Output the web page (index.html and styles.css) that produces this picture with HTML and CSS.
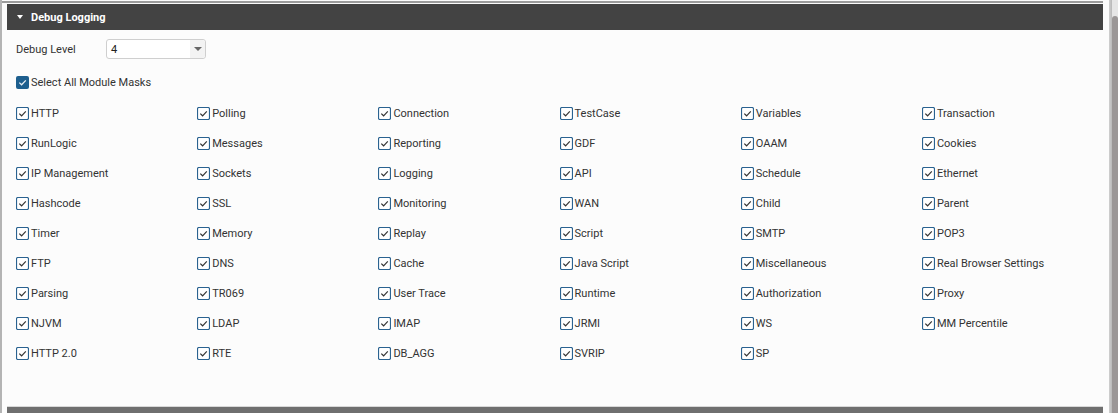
FILE: index.html
```html
<!DOCTYPE html>
<html>
<head>
<meta charset="utf-8">
<link rel="stylesheet" href="styles.css">
</head>
<body>
<svg width="0" height="0" class="defs">
  <defs>
    <symbol id="cbx" viewBox="0 0 13 13">
      <rect x="0.5" y="0.5" width="12" height="12" rx="1.5" fill="#fff" stroke="#2a6290" stroke-width="1.2"/>
      <path d="M3.3 6.6 L5.6 8.8 L9.8 4.4" fill="none" stroke="#333" stroke-width="1.2"/>
    </symbol>
  </defs>
</svg>
<div class="page">
  <div class="main">
    <div class="topline"></div>
    <div class="header">
      <span class="caret"></span>
      <span class="title">Debug Logging</span>
    </div>
    <div class="content">
      <div class="level-row">
        <span class="level-label">Debug Level</span>
        <div class="select">
          <span class="select-value">4</span>
          <span class="select-arrow"><span class="arrow-tri"></span></span>
        </div>
      </div>
      <div class="all-row">
        <svg class="cb" width="13" height="13" viewBox="0 0 13 13"><rect x="0" y="0" width="13" height="13" rx="2" fill="#1e5f8e"/><path d="M3.3 6.6 L5.6 8.8 L9.8 4.4" fill="none" stroke="#e8eef3" stroke-width="1.3"/></svg>
        <span class="lbl">Select All Module Masks</span>
      </div>
      <div class="grid">
        <div class="item"><svg class="cb" width="13" height="13"><use href="#cbx"/></svg><span class="lbl">HTTP</span></div>
        <div class="item"><svg class="cb" width="13" height="13"><use href="#cbx"/></svg><span class="lbl">Polling</span></div>
        <div class="item"><svg class="cb" width="13" height="13"><use href="#cbx"/></svg><span class="lbl">Connection</span></div>
        <div class="item"><svg class="cb" width="13" height="13"><use href="#cbx"/></svg><span class="lbl">TestCase</span></div>
        <div class="item"><svg class="cb" width="13" height="13"><use href="#cbx"/></svg><span class="lbl">Variables</span></div>
        <div class="item"><svg class="cb" width="13" height="13"><use href="#cbx"/></svg><span class="lbl">Transaction</span></div>

        <div class="item"><svg class="cb" width="13" height="13"><use href="#cbx"/></svg><span class="lbl">RunLogic</span></div>
        <div class="item"><svg class="cb" width="13" height="13"><use href="#cbx"/></svg><span class="lbl">Messages</span></div>
        <div class="item"><svg class="cb" width="13" height="13"><use href="#cbx"/></svg><span class="lbl">Reporting</span></div>
        <div class="item"><svg class="cb" width="13" height="13"><use href="#cbx"/></svg><span class="lbl">GDF</span></div>
        <div class="item"><svg class="cb" width="13" height="13"><use href="#cbx"/></svg><span class="lbl">OAAM</span></div>
        <div class="item"><svg class="cb" width="13" height="13"><use href="#cbx"/></svg><span class="lbl">Cookies</span></div>

        <div class="item"><svg class="cb" width="13" height="13"><use href="#cbx"/></svg><span class="lbl">IP Management</span></div>
        <div class="item"><svg class="cb" width="13" height="13"><use href="#cbx"/></svg><span class="lbl">Sockets</span></div>
        <div class="item"><svg class="cb" width="13" height="13"><use href="#cbx"/></svg><span class="lbl">Logging</span></div>
        <div class="item"><svg class="cb" width="13" height="13"><use href="#cbx"/></svg><span class="lbl">API</span></div>
        <div class="item"><svg class="cb" width="13" height="13"><use href="#cbx"/></svg><span class="lbl">Schedule</span></div>
        <div class="item"><svg class="cb" width="13" height="13"><use href="#cbx"/></svg><span class="lbl">Ethernet</span></div>

        <div class="item"><svg class="cb" width="13" height="13"><use href="#cbx"/></svg><span class="lbl">Hashcode</span></div>
        <div class="item"><svg class="cb" width="13" height="13"><use href="#cbx"/></svg><span class="lbl">SSL</span></div>
        <div class="item"><svg class="cb" width="13" height="13"><use href="#cbx"/></svg><span class="lbl">Monitoring</span></div>
        <div class="item"><svg class="cb" width="13" height="13"><use href="#cbx"/></svg><span class="lbl">WAN</span></div>
        <div class="item"><svg class="cb" width="13" height="13"><use href="#cbx"/></svg><span class="lbl">Child</span></div>
        <div class="item"><svg class="cb" width="13" height="13"><use href="#cbx"/></svg><span class="lbl">Parent</span></div>

        <div class="item"><svg class="cb" width="13" height="13"><use href="#cbx"/></svg><span class="lbl">Timer</span></div>
        <div class="item"><svg class="cb" width="13" height="13"><use href="#cbx"/></svg><span class="lbl">Memory</span></div>
        <div class="item"><svg class="cb" width="13" height="13"><use href="#cbx"/></svg><span class="lbl">Replay</span></div>
        <div class="item"><svg class="cb" width="13" height="13"><use href="#cbx"/></svg><span class="lbl">Script</span></div>
        <div class="item"><svg class="cb" width="13" height="13"><use href="#cbx"/></svg><span class="lbl">SMTP</span></div>
        <div class="item"><svg class="cb" width="13" height="13"><use href="#cbx"/></svg><span class="lbl">POP3</span></div>

        <div class="item"><svg class="cb" width="13" height="13"><use href="#cbx"/></svg><span class="lbl">FTP</span></div>
        <div class="item"><svg class="cb" width="13" height="13"><use href="#cbx"/></svg><span class="lbl">DNS</span></div>
        <div class="item"><svg class="cb" width="13" height="13"><use href="#cbx"/></svg><span class="lbl">Cache</span></div>
        <div class="item"><svg class="cb" width="13" height="13"><use href="#cbx"/></svg><span class="lbl">Java Script</span></div>
        <div class="item"><svg class="cb" width="13" height="13"><use href="#cbx"/></svg><span class="lbl">Miscellaneous</span></div>
        <div class="item"><svg class="cb" width="13" height="13"><use href="#cbx"/></svg><span class="lbl">Real Browser Settings</span></div>

        <div class="item"><svg class="cb" width="13" height="13"><use href="#cbx"/></svg><span class="lbl">Parsing</span></div>
        <div class="item"><svg class="cb" width="13" height="13"><use href="#cbx"/></svg><span class="lbl">TR069</span></div>
        <div class="item"><svg class="cb" width="13" height="13"><use href="#cbx"/></svg><span class="lbl">User Trace</span></div>
        <div class="item"><svg class="cb" width="13" height="13"><use href="#cbx"/></svg><span class="lbl">Runtime</span></div>
        <div class="item"><svg class="cb" width="13" height="13"><use href="#cbx"/></svg><span class="lbl">Authorization</span></div>
        <div class="item"><svg class="cb" width="13" height="13"><use href="#cbx"/></svg><span class="lbl">Proxy</span></div>

        <div class="item"><svg class="cb" width="13" height="13"><use href="#cbx"/></svg><span class="lbl">NJVM</span></div>
        <div class="item"><svg class="cb" width="13" height="13"><use href="#cbx"/></svg><span class="lbl">LDAP</span></div>
        <div class="item"><svg class="cb" width="13" height="13"><use href="#cbx"/></svg><span class="lbl">IMAP</span></div>
        <div class="item"><svg class="cb" width="13" height="13"><use href="#cbx"/></svg><span class="lbl">JRMI</span></div>
        <div class="item"><svg class="cb" width="13" height="13"><use href="#cbx"/></svg><span class="lbl">WS</span></div>
        <div class="item"><svg class="cb" width="13" height="13"><use href="#cbx"/></svg><span class="lbl">MM Percentile</span></div>

        <div class="item"><svg class="cb" width="13" height="13"><use href="#cbx"/></svg><span class="lbl">HTTP 2.0</span></div>
        <div class="item"><svg class="cb" width="13" height="13"><use href="#cbx"/></svg><span class="lbl">RTE</span></div>
        <div class="item"><svg class="cb" width="13" height="13"><use href="#cbx"/></svg><span class="lbl">DB_AGG</span></div>
        <div class="item"><svg class="cb" width="13" height="13"><use href="#cbx"/></svg><span class="lbl">SVRIP</span></div>
        <div class="item"><svg class="cb" width="13" height="13"><use href="#cbx"/></svg><span class="lbl">SP</span></div>
      </div>
    </div>
    <div class="bottombar"></div>
  </div>
  <div class="scroll">
    <div class="scroll-track"></div>
    <div class="scroll-thumb"></div>
  </div>
</div>
</body>
</html>
```

FILE: styles.css
```css
html, body {
  margin: 0;
  padding: 0;
  background: #fcfcfc;
}
body {
  font-family: Roboto, "Liberation Sans", sans-serif;
  font-size: 11px;
  color: #333;
}
.defs {
  position: absolute;
  width: 0;
  height: 0;
  overflow: hidden;
}
.page {
  display: flex;
  height: 413px;
  overflow: hidden;
}
.main {
  flex: 1;
  display: flex;
  flex-direction: column;
  border-left: 2px solid #b4b4b4;
  padding: 0 6px 0 5px;
  background: #fcfcfc;
}
.topline {
  height: 2px;
  margin-top: 1px;
  margin-bottom: 1px;
  margin-left: -5px;
  background: #9c9c9c;
}
.header {
  height: 26px;
  background: #434343;
  display: flex;
  align-items: center;
  padding-left: 10px;
  color: #fff;
  font-weight: bold;
  font-size: 11px;
}
.caret {
  width: 0;
  height: 0;
  border-left: 3.5px solid transparent;
  border-right: 3.5px solid transparent;
  border-top: 4px solid #fff;
  margin-right: 8px;
}
.content {
  flex: 1;
  padding: 9px 0 0 9px;
}
.level-row {
  display: flex;
  align-items: center;
  height: 20px;
}
.level-label {
  width: 90px;
}
.select {
  width: 98px;
  height: 18px;
  border: 1px solid #cfcfcf;
  border-radius: 3px;
  background: #fff;
  display: flex;
  align-items: center;
}
.select-value {
  flex: 1;
  padding-left: 4px;
  font-size: 11px;
  color: #222;
}
.select-arrow {
  width: 15px;
  height: 18px;
  background: #f3f3f3;
  display: flex;
  align-items: center;
  justify-content: center;
  border-radius: 0 3px 3px 0;
}
.arrow-tri {
  width: 0;
  height: 0;
  border-left: 4px solid transparent;
  border-right: 4px solid transparent;
  border-top: 4px solid #666;
}
.all-row {
  display: flex;
  align-items: center;
  height: 16px;
  margin-top: 15px;
}
.cb {
  flex: none;
  margin-right: 2px;
  display: block;
}
.grid {
  margin-top: 8px;
  display: grid;
  grid-template-columns: repeat(6, 181.2px);
  grid-auto-rows: 30px;
}
.item {
  display: flex;
  align-items: center;
  white-space: nowrap;
}
.lbl {
  line-height: 13px;
}
.bottombar {
  height: 6px;
  background: #6f6f6f;
  border-top: 1px solid #d8d8d8;
}
.scroll {
  width: 11px;
  display: flex;
  background: #e6e6e6;
}
.scroll-track {
  width: 3px;
  background: linear-gradient(to right, #d0d0d0, #b8b8b8);
}
.scroll-thumb {
  flex: 1;
  margin-top: 16px;
  background: #9b9797;
  border-radius: 3px 3px 0 0;
}
```
